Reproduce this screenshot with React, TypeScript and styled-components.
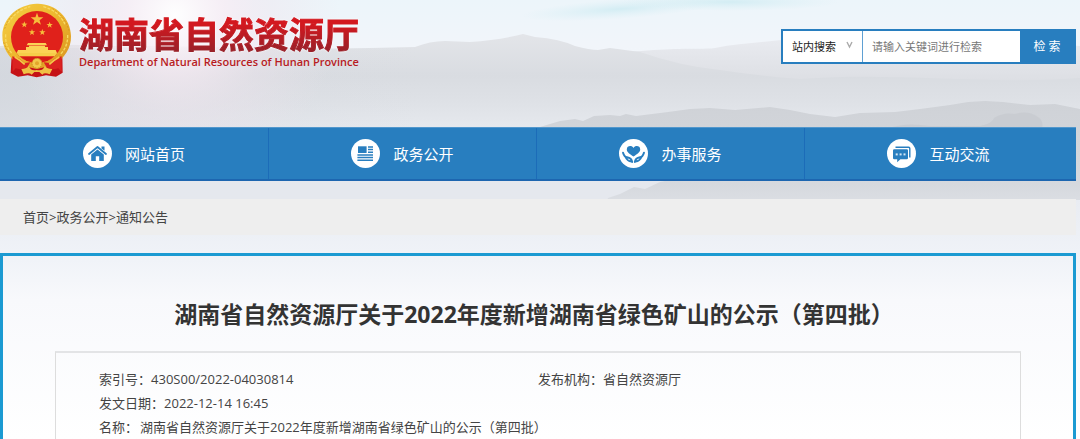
import React from "react";
import styled, { createGlobalStyle } from "styled-components";

const BLUE = "#287ebf";

const GlobalStyle = createGlobalStyle`
  *, *::before, *::after { box-sizing: border-box; }
  body {
    margin: 0;
    color: #444;
    background: #fff;
    font-family: "Open Sans", "Noto Sans CJK SC", sans-serif;
    font-size: 13px;
    line-height: 24px;
  }
`;

const Page = styled.div`
  position: relative;
  isolation: isolate;
  min-height: 100vh;
  padding-right: 4px;
  display: flex;
  flex-direction: column;
  overflow: hidden;
`;

const Backdrop = styled.svg`
  position: absolute;
  z-index: -1;
  inset: 0 0 auto 0;
  width: 100%;
  height: 439px;
`;

const Header = styled.header`
  display: flex;
  justify-content: space-between;
  align-items: flex-start;
  gap: 24px;
  min-height: 127px;
`;

const Brand = styled.a`
  display: flex;
  color: #b81c22;
  text-decoration: none;
`;

const Emblem = styled.svg`
  flex: none;
  width: 76px;
  height: 80px;
`;

const BrandText = styled.div`
  display: flex;
  flex-direction: column;
  padding: 16px 0 0 3px;
  white-space: nowrap;
`;

const BrandName = styled.span`
  font-family: "Liberation Sans", "Noto Sans CJK SC", sans-serif;
  font-size: 35px;
  font-weight: 700;
  line-height: 40px;
  color: transparent;
  background: linear-gradient(#d3181f 20%, #94222a 95%);
  background-clip: text;
  -webkit-background-clip: text;
  -webkit-text-stroke: 1px transparent;
  filter: drop-shadow(0 0 1px #fff);
`;

const BrandSub = styled.span`
  font-size: 11px;
  font-weight: 600;
  line-height: 12px;
`;

const SearchForm = styled.form`
  display: flex;
  flex: 0 1 294px;
  height: 35px;
  margin-top: 29px;
  border: 2px solid ${BLUE};
  background: #fff;
`;

const ScopeField = styled.label`
  position: relative;
  display: flex;
  flex: none;
  width: 80px;
  border-right: 1px solid #5fa0d3;
`;

const ScopeSelect = styled.select`
  width: 100%;
  padding: 0 0 0 9px;
  border: 0;
  appearance: none;
  background: transparent;
  color: #222;
  font: inherit;
  font-size: 11px;
`;

const Chevron = styled.svg`
  position: absolute;
  top: 10px;
  right: 9px;
  width: 7px;
  height: 8px;
  pointer-events: none;
`;

const SearchInput = styled.input`
  flex: 1;
  min-width: 0;
  padding: 0 9px;
  border: 0;
  background: #fff;
  font: inherit;
  font-size: 11px;
  &::placeholder { color: #777; opacity: 1; }
`;

const SearchButton = styled.button`
  flex: none;
  width: 54px;
  padding: 0;
  border: 0;
  background: ${BLUE};
  color: #fff;
  font: inherit;
  font-size: 12px;
`;

const Nav = styled.nav`
  display: grid;
  grid-template-columns: repeat(4, 1fr);
  height: 54px;
  padding-right: 4px;
  background: ${BLUE};
  border-top: 1px solid #5297cc;
  border-bottom: 2px solid #1d66b0;
`;

const NavLink = styled.a`
  display: flex;
  align-items: center;
  justify-content: center;
  gap: 13px;
  color: #fff;
  font-size: 15px;
  text-decoration: none;
  & + & { border-left: 1px solid #1c6cb8; }
`;

const NavIcon = styled.svg`
  width: 29px;
  height: 29px;
`;

const Breadcrumb = styled.nav`
  margin-top: 18px;
  padding: 6px 23px;
  background: #eee;
`;

const Crumb = styled.a`
  color: #444;
  text-decoration: none;
`;

const Panel = styled.main`
  flex: 1;
  margin-top: 18px;
  padding: 40px 52px 0;
  border: 3px solid #1b9ad2;
  border-bottom: 0;
  display: flex;
  flex-direction: column;
`;

const Title = styled.h1`
  margin: 0 0 19px;
  padding-right: 8px;
  color: #333;
  font-size: 23px;
  font-weight: 700;
  line-height: 36px;
  text-align: center;
`;

const Info = styled.dl`
  flex: 1;
  display: grid;
  grid-template-columns: 1fr 1fr;
  align-content: start;
  margin: 0;
  padding: 14px 43px 0;
  border: 1px solid #ddd;
  border-top: 2px solid #e3e4e6;
  border-bottom: 0;
`;

const InfoItem = styled.div<{ $wide?: boolean }>`
  display: flex;
  grid-column: ${(p) => (p.$wide ? "1 / -1" : "auto")};
`;

const InfoLabel = styled.dt``;

const InfoValue = styled.dd<{ $spaced?: boolean }>`
  margin: 0 0 0 ${(p) => (p.$spaced ? "2px" : "0")};
`;

function star(cx: number, cy: number, r: number) {
  return Array.from({ length: 10 }, (_, i) => {
    const a = -Math.PI / 2 + (i * Math.PI) / 5;
    const d = i % 2 ? r * 0.4 : r;
    return `${(cx + d * Math.cos(a)).toFixed(1)},${(cy + d * Math.sin(a)).toFixed(1)}`;
  }).join(" ");
}

function Scenery() {
  return (
    <Backdrop viewBox="0 0 1080 439" preserveAspectRatio="none" aria-hidden="true">
      <defs>
        <linearGradient id="sky" x1="0" y1="0" x2="0" y2="1">
          <stop offset="0" stopColor="#ecf5fa" />
          <stop offset="0.1" stopColor="#f1f5fa" />
          <stop offset="1" stopColor="#fff" />
        </linearGradient>
        <linearGradient id="far" gradientUnits="userSpaceOnUse" x1="0" y1="34" x2="0" y2="200">
          <stop offset="0" stopColor="#e3e5e9" />
          <stop offset="0.25" stopColor="#d9dce1" />
          <stop offset="0.4" stopColor="#dee1e6" />
          <stop offset="0.55" stopColor="#e5e8ed" />
          <stop offset="1" stopColor="#e5e8ee" />
        </linearGradient>
        <linearGradient id="shade" gradientUnits="userSpaceOnUse" x1="0" y1="0" x2="420" y2="0">
          <stop offset="0" stopColor="#d2d6dd" stopOpacity="0.7" />
          <stop offset="1" stopColor="#d8dbe1" stopOpacity="0" />
        </linearGradient>
        <linearGradient id="pale" gradientUnits="userSpaceOnUse" x1="0" y1="38" x2="0" y2="80">
          <stop offset="0" stopColor="#e9ebf0" />
          <stop offset="1" stopColor="#dddfe4" />
        </linearGradient>
        <linearGradient id="near" gradientUnits="userSpaceOnUse" x1="0" y1="101" x2="0" y2="240">
          <stop offset="0" stopColor="#cfd2d7" />
          <stop offset="0.6" stopColor="#d6d9de" />
          <stop offset="1" stopColor="#e6e9ef" />
        </linearGradient>
        <linearGradient id="mist" gradientUnits="userSpaceOnUse" x1="0" y1="200" x2="0" y2="439">
          <stop offset="0" stopColor="#e9ecf2" />
          <stop offset="0.25" stopColor="#f0f3f8" />
          <stop offset="0.42" stopColor="#f8f9fc" />
          <stop offset="1" stopColor="#fff" />
        </linearGradient>
        <radialGradient id="glow" gradientUnits="userSpaceOnUse" cx="175" cy="15" r="165">
          <stop offset="0" stopColor="#fff" stopOpacity="0.95" />
          <stop offset="0.3" stopColor="#f8ecf4" stopOpacity="0.75" />
          <stop offset="0.6" stopColor="#efe4ed" stopOpacity="0.4" />
          <stop offset="1" stopColor="#eee4ec" stopOpacity="0" />
        </radialGradient>
        <radialGradient id="cyan">
          <stop offset="0" stopColor="#cdebf2" stopOpacity="0.8" />
          <stop offset="1" stopColor="#d8eff5" stopOpacity="0" />
        </radialGradient>
      </defs>
      <rect width="1080" height="439" fill="url(#sky)" />
      <ellipse cx="620" cy="9" rx="100" ry="10" fill="url(#cyan)" transform="rotate(-4 620 9)" />
      <ellipse cx="730" cy="2" rx="110" ry="9" fill="url(#cyan)" />
      <path d="M610 54 C680 46 700 50 715 48 C740 43 770 42 790 39 C850 36 900 46 960 42 C1010 39 1050 44 1080 46 V160 H610Z" fill="url(#pale)" />
      <path d="M0 46 C60 42 90 47 160 46 C230 47 290 50 370 48 L415 47 Q430 41 445 41 L470 42 Q500 40 523 34 L535 37 Q560 39 575 46 Q590 50 598 50 L610 48 L640 52 Q680 66 720 70 Q760 76 800 79 C900 72 980 85 1080 78 V230 H0Z" fill="url(#far)" />
      <rect y="48" width="420" height="79" fill="url(#shade)" />
      <rect width="380" height="127" fill="url(#glow)" />
      <path d="M540 127 L560 121 L575 119 L583 121 L594 116 L610 115 L620 116 L626 114 L636 116 L660 113 L668 112 L690 109 L710 108 L735 110 L770 107 L790 110 L810 114 L835 117 L860 113 L895 112 L920 109 L950 105 L968 102 L985 101 L1003 102 L1030 105 L1055 104 L1080 109 V240 H590 L608 198 L620 194 L634 187 L645 189 L660 182 L690 176Z" fill="url(#near)" />
      <path d="M890 128 Q905 122 930 126 L980 126 Q993 123 994 118 Q1003 112 1015 114 Q1028 110 1038 117 Q1044 121 1042 128Z" fill="#c6c9ce" opacity="0.7" />
      <rect y="200" width="1080" height="239" fill="url(#mist)" />
    </Backdrop>
  );
}

function NationalEmblem() {
  return (
    <Emblem viewBox="0 0 228 240" role="img" aria-label="国徽">
      <defs>
        <linearGradient id="gold" x1="0" y1="0" x2="1" y2="1">
          <stop offset="0" stopColor="#f4cf45" />
          <stop offset="0.5" stopColor="#edb72e" />
          <stop offset="1" stopColor="#d8911f" />
        </linearGradient>
      </defs>
      <path d="M35 164 L32 219 L54 230 L83 226 L110 232 L138 226 L168 230 L188 218 L187 164Z" fill="#c51216" />
      <path d="M110 11 C164 9 212 51 213 108 C214 145 193 174 162 195 L110 207 L58 195 C26 174 6 143 7 106 C8 52 55 13 110 11Z" fill="url(#gold)" />
      <path d="M25 69 Q47 31 91 20 M17 103 Q15 138 35 159 M130 20 Q176 32 195 73 M203 105 Q204 139 182 162" fill="none" stroke="#f7da62" strokeWidth="4" strokeDasharray="9 4" />
      <path d="M14 86 Q29 43 61 27 M158 26 Q195 49 207 92 M11 127 Q19 149 31 163" fill="none" stroke="#c9861d" strokeWidth="2" strokeDasharray="5 5" />
      <circle cx="111" cy="111" r="78" fill="#e0211b" />
      <polygon points={star(111, 58, 20)} fill="#f6bd3b" />
      <polygon points={star(73, 74, 10)} fill="#f6bd3b" />
      <polygon points={star(149, 75, 10)} fill="#f6bd3b" />
      <polygon points={star(96, 97, 10)} fill="#f6bd3b" />
      <polygon points={star(127, 97, 10)} fill="#f6bd3b" />
      <path d="M84 129 H137 L141 136 H80Z M87 137 H135 V141 H144 V150 H167 L171 159 H50 L54 150 H78 V141 H87Z" fill="#fbd255" />
      <path d="M50 159 H172 L164 169 H58Z" fill="#f6cd49" />
      <path d="M68 171 H153 L142 183 L128 179 H94 L80 183Z" fill="#d41a18" />
      <path d="M37 169 Q59 173 73 189 L91 187 L82 202 Q62 211 47 205 L38 215Z M185 169 Q163 173 149 189 L131 187 L140 202 Q160 211 175 205 L185 215Z" fill="#db2220" />
      <path d="M44 171 Q62 181 74 193 M178 171 Q160 181 148 193" stroke="#f4ca48" strokeWidth="5" fill="none" />
      <path d="M64 207 Q78 207 87 198 Q91 214 110 210 Q130 214 134 198 Q142 207 157 207 L149 223 Q133 216 127 224 L118 216 H103 L95 224 Q88 216 71 223Z" fill="#f0c044" />
      <circle cx="111" cy="190" r="15" fill="#f2c84b" stroke="#c98a20" strokeWidth="3" strokeDasharray="5 3" />
      <circle cx="111" cy="190" r="6" fill="#e3a52b" />
    </Emblem>
  );
}

function HomeIcon() {
  return (
    <NavIcon viewBox="0 0 29 29" aria-hidden="true">
      <circle cx="14.5" cy="14.5" r="14.5" fill="#fff" />
      <path d="M6 15 L14.5 8 L23 15" fill="none" stroke={BLUE} strokeWidth="1.8" strokeLinecap="round" strokeLinejoin="round" />
      <path d="M18.5 7.5 H21.5 V11.8 L18.5 9.4Z" fill={BLUE} />
      <path d="M8.2 15.4 L14.5 10.4 L20.8 15.4 V22 H16.2 V17.2 H12.8 V22 H8.2Z" fill={BLUE} />
    </NavIcon>
  );
}

function NewsIcon() {
  return (
    <NavIcon viewBox="0 0 29 29" aria-hidden="true">
      <circle cx="14.5" cy="14.5" r="14.5" fill="#fff" />
      <rect x="7" y="7.3" width="8.6" height="6.7" fill={BLUE} />
      <path d="M17 8H22M17 10.6H22M17 13.2H22M6.4 16H22M6.4 18.6H22M6.4 21.2H22" stroke={BLUE} strokeWidth="1.5" />
    </NavIcon>
  );
}

function CareIcon() {
  return (
    <NavIcon viewBox="0 0 29 29" aria-hidden="true">
      <circle cx="14.5" cy="14.5" r="14.5" fill="#fff" />
      <path d="M14.5 17.4 C11 15 7.8 13.2 7.8 10.4 C7.8 6.6 12.8 6 14.5 9 C16.2 6 21.2 6.6 21.2 10.4 C21.2 13.2 18 15 14.5 17.4Z" fill={BLUE} />
      <path d="M4 13.6 Q5.4 18.2 8 18.2 Q12.6 19 13.2 23 M8 18.2 L6.6 18 Q8 22 12.6 22.6 M25 13.6 Q23.6 18.2 21 18.2 Q16.4 19 15.8 23 M21 18.2 L22.4 18 Q21 22 16.4 22.6" fill="none" stroke={BLUE} strokeWidth="1.9" strokeLinecap="round" />
    </NavIcon>
  );
}

function ChatIcon() {
  return (
    <NavIcon viewBox="0 0 29 29" aria-hidden="true">
      <circle cx="14.5" cy="14.5" r="14.5" fill="#fff" />
      <path d="M8.5 8.2 H21.6 Q22.8 8.2 22.8 9.4 V18.4" fill="none" stroke={BLUE} strokeWidth="1.4" />
      <path d="M7.2 10.2 H19.8 Q21 10.2 21 11.4 V19 Q21 20.2 19.8 20.2 H13.4 L10.2 23.2 V20.2 H7.2 Q6 20.2 6 19 V11.4 Q6 10.2 7.2 10.2Z" fill={BLUE} />
      <g fill="#d4e6f4">
        <rect x="8.7" y="14.4" width="2" height="2" />
        <rect x="12.6" y="14.4" width="2" height="2" />
        <rect x="16.5" y="14.4" width="2" height="2" />
      </g>
    </NavIcon>
  );
}

const NAV = [
  { label: "网站首页", Icon: HomeIcon },
  { label: "政务公开", Icon: NewsIcon },
  { label: "办事服务", Icon: CareIcon },
  { label: "互动交流", Icon: ChatIcon },
];

const INFO = [
  { label: "索引号：", value: "430S00/2022-04030814" },
  { label: "发布机构：", value: "省自然资源厅" },
  { label: "发文日期：", value: "2022-12-14 16:45", wide: true },
  { label: "名称：", value: "湖南省自然资源厅关于2022年度新增湖南省绿色矿山的公示（第四批）", wide: true, spaced: true },
];

export default function App() {
  return (
    <Page lang="zh-CN">
      <GlobalStyle />
      <Scenery />
      <Header>
        <Brand href="#">
          <NationalEmblem />
          <BrandText>
            <BrandName>湖南省自然资源厅</BrandName>
            <BrandSub>Department of Natural Resources of Hunan Province</BrandSub>
          </BrandText>
        </Brand>
        <SearchForm onSubmit={(e) => e.preventDefault()}>
          <ScopeField>
            <ScopeSelect aria-label="搜索范围">
              <option>站内搜索</option>
            </ScopeSelect>
            <Chevron viewBox="0 0 7 8" aria-hidden="true">
              <path d="M1 1 L3.5 6 L6 1" fill="none" stroke="#aaa" strokeWidth="1.4" />
            </Chevron>
          </ScopeField>
          <SearchInput type="text" placeholder="请输入关键词进行检索" aria-label="关键词" />
          <SearchButton type="submit">检 索</SearchButton>
        </SearchForm>
      </Header>
      <Nav>
        {NAV.map(({ label, Icon }) => (
          <NavLink href="#" key={label}>
            <Icon />
            {label}
          </NavLink>
        ))}
      </Nav>
      <Breadcrumb>
        <Crumb href="#">首页</Crumb>&gt;<Crumb href="#">政务公开</Crumb>&gt;<Crumb href="#">通知公告</Crumb>
      </Breadcrumb>
      <Panel>
        <Title>湖南省自然资源厅关于2022年度新增湖南省绿色矿山的公示（第四批）</Title>
        <Info>
          {INFO.map((item) => (
            <InfoItem key={item.label} $wide={item.wide}>
              <InfoLabel>{item.label}</InfoLabel>
              <InfoValue $spaced={item.spaced}>{item.value}</InfoValue>
            </InfoItem>
          ))}
        </Info>
      </Panel>
    </Page>
  );
}
